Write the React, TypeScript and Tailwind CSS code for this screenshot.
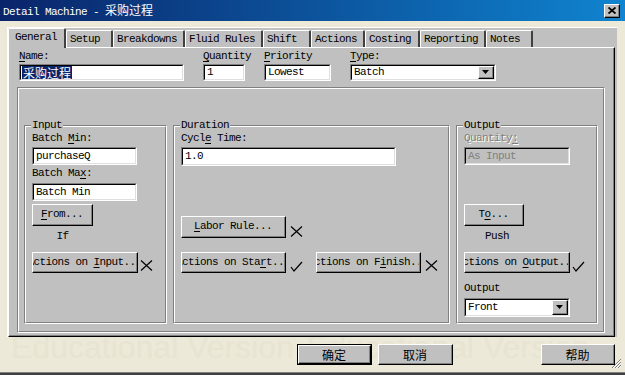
import React from 'react';

type Kids = { children?: React.ReactNode; className?: string };

const FONT = "font-['Liberation_Mono','Noto_Sans_CJK_SC',monospace] text-[11px] leading-[13px] tracking-[-0.6px] text-black";
const CJK = "font-['Noto_Sans_CJK_SC',sans-serif] tracking-normal";

function U({ children }: Kids) {
  return <span className="underline decoration-1 underline-offset-[2px]">{children}</span>;
}

// classic raised 3d button
function Raised({ children, className = '' }: Kids) {
  return (
    <div className={`flex shrink-0 border border-t-white border-l-white border-r-black border-b-black bg-[#c0c0c0] ${className}`}>
      <div className="flex min-w-0 flex-1 items-center justify-center overflow-hidden whitespace-nowrap border-r border-b border-r-[#808080] border-b-[#808080]">
        <span className="shrink-0">{children}</span>
      </div>
    </div>
  );
}

// sunken edit / combo box
function Sunken({ children, className = '', inner = 'bg-white pl-[2px]' }: Kids & { inner?: string }) {
  return (
    <div className={`flex shrink-0 border border-t-[#808080] border-l-[#808080] border-r-white border-b-white ${className}`}>
      <div className={`flex min-w-0 flex-1 items-center overflow-hidden whitespace-nowrap border border-t-black border-l-black border-r-[#dfdfdf] border-b-[#dfdfdf] ${inner}`}>
        {children}
      </div>
    </div>
  );
}

function DropBtn() {
  return (
    <Raised className="h-full w-[16px]">
      <svg width="7" height="4" viewBox="0 0 7 4" aria-hidden>
        <path d="M0 0h7L3.5 4z" fill="black" />
      </svg>
    </Raised>
  );
}

function Group({ label, children, className = '' }: Kids & { label?: string }) {
  return (
    <div className={`relative shrink-0 border border-t-[#808080] border-l-[#808080] border-r-white border-b-white ${className}`}>
      <div className="flex h-full flex-col border border-t-white border-l-white border-r-[#808080] border-b-[#808080] pl-[6px]">
        {children}
      </div>
      {label && <span className="absolute left-[6px] top-[-7px] bg-[#c0c0c0] px-[1px]">{label}</span>}
    </div>
  );
}

const XMark = ({ className = '' }: { className?: string }) => (
  <svg className={`shrink-0 ${className}`} width="13" height="11" viewBox="0 0 13 11" aria-hidden>
    <path d="M1 0.5L12 10.5M12 0.5L1 10.5" stroke="black" strokeWidth="1.2" fill="none" />
  </svg>
);

const Check = ({ className = '' }: { className?: string }) => (
  <svg className={`shrink-0 ${className}`} width="13" height="11" viewBox="0 0 13 11" aria-hidden>
    <path d="M1 6L4 10L12 1" stroke="black" strokeWidth="1.2" fill="none" />
  </svg>
);

const TABS = [
  { label: 'Setup', w: 'w-[47px]' },
  { label: 'Breakdowns', w: 'w-[72px]' },
  { label: 'Fluid Rules', w: 'w-[78px]' },
  { label: 'Shift', w: 'w-[48px]' },
  { label: 'Actions', w: 'w-[54px]' },
  { label: 'Costing', w: 'w-[55px]' },
  { label: 'Reporting', w: 'w-[66px]' },
  { label: 'Notes', w: 'w-[47px]' },
];

export default function App() {
  return (
    <div className={`relative flex h-[375px] w-[625px] flex-col overflow-hidden bg-[#ece9d8] ${FONT}`}>
      {/* title bar */}
      <div className="flex h-[21px] shrink-0 items-center bg-linear-to-r from-[#0a246a] to-[#1084d0] pl-[3px] pr-[5px] text-white">
        <span className="flex-1 whitespace-nowrap">
          Detail Machine - <span className={`${CJK} text-[12px]`}>采购过程</span>
        </span>
        <Raised className="h-[14px] w-[16px] text-black">
          <svg width="8" height="7" viewBox="0 0 8 7" aria-hidden>
            <path d="M0.5 0.5L7.5 6.5M7.5 0.5L0.5 6.5" stroke="black" strokeWidth="1.8" fill="none" />
          </svg>
        </Raised>
      </div>

      {/* tab control */}
      <div className="mt-[6px] pl-[7px]">
        <div className="flex h-[310px] w-[610px] flex-col border-t border-l border-t-white border-l-white bg-[#c0c0c0]">
          <div className="flex h-[19px] shrink-0 items-end">
            <div className="relative z-10 mb-[-1px] h-[20px] w-[58px] shrink-0 rounded-tl-[2px] rounded-tr-[2px] border-t border-l border-r-2 border-t-white border-l-white border-r-[#404040] bg-[#c0c0c0] pl-[6px] pt-[2px]">
              General
            </div>
            {TABS.map((t) => (
              <div
                key={t.label}
                className={`h-[17px] shrink-0 whitespace-nowrap rounded-tl-[2px] rounded-tr-[2px] border-t border-l border-r-2 border-t-white border-l-white border-r-[#404040] pl-[3px] pt-[2px] ${t.w}`}
              >
                {t.label}
              </div>
            ))}
          </div>

          {/* panel */}
          <div className="flex h-[290px] w-[607px] shrink-0 flex-col border border-t-white border-l-white border-r-black border-b-black">
            <div className="flex flex-1 flex-col border-r border-b border-r-[#808080] border-b-[#808080]">
              {/* top row */}
              <div className="flex pl-[10px] pt-[2px]">
                <div className="flex w-[165px] flex-col">
                  <div><U>N</U>ame:</div>
                  <Sunken className="mt-[1px] h-[17px] w-[165px]" inner="bg-white pl-[1px]">
                    <span className={`${CJK} bg-[#0a246a] px-[1px] text-[12px] leading-[13px] text-white`}>采购过程</span>
                  </Sunken>
                </div>
                <div className="ml-[19px] flex w-[42px] flex-col">
                  <div><U>Q</U>uantity</div>
                  <Sunken className="mt-[1px] h-[17px] w-[42px]">1</Sunken>
                </div>
                <div className="ml-[19px] flex w-[67px] flex-col">
                  <div><U>P</U>riority</div>
                  <Sunken className="mt-[1px] h-[17px] w-[67px]">Lowest</Sunken>
                </div>
                <div className="ml-[19px] flex w-[146px] flex-col">
                  <div><U>T</U>ype:</div>
                  <Sunken className="mt-[1px] h-[17px] w-[146px]" inner="bg-white">
                    <span className="flex-1 pl-[2px]">Batch</span>
                    <DropBtn />
                  </Sunken>
                </div>
              </div>

              {/* etched frame */}
              <Group className="ml-[8px] mt-[6px] h-[246px] w-[588px]">
                <div className="mt-[36px] flex gap-[6px]">
                  {/* Input */}
                  <Group label="Input" className="ml-[-1px] h-[199px] w-[143px]">
                    <div className="mt-[5px]">Batch <U>M</U>in:</div>
                    <Sunken className="mt-[2px] h-[18px] w-[105px]">purchaseQ</Sunken>
                    <div className="mt-[2px]">Batch Ma<U>x</U>:</div>
                    <Sunken className="mt-[3px] h-[18px] w-[105px]">Batch Min</Sunken>
                    <Raised className="mt-[3px] h-[22px] w-[61px]"><U>F</U>rom...</Raised>
                    <div className="mt-[4px] w-[61px] text-center">If</div>
                    <div className="mt-[9px] flex items-end">
                      <Raised className="h-[21px] w-[106px]">Actions on <U>I</U>nput...</Raised>
                      <XMark className="mb-[2px] ml-[2px]" />
                    </div>
                  </Group>

                  {/* Duration */}
                  <Group label="Duration" className="h-[199px] w-[277px]">
                    <div className="mt-[5px]">Cycl<U>e</U> Time:</div>
                    <Sunken className="mt-[2px] h-[19px] w-[215px]">1.0</Sunken>
                    <div className="mt-[50px] flex items-end">
                      <Raised className="h-[22px] w-[105px]"><U>L</U>abor Rule...</Raised>
                      <XMark className="mb-[1px] ml-[4px]" />
                    </div>
                    <div className="mt-[14px] flex items-end">
                      <Raised className="h-[21px] w-[105px]">Actions on Sta<U>r</U>t...</Raised>
                      <Check className="mb-[1px] ml-[4px]" />
                      <Raised className="ml-[13px] h-[21px] w-[105px]">Actions on F<U>i</U>nish...</Raised>
                      <XMark className="mb-[2px] ml-[4px]" />
                    </div>
                  </Group>

                  {/* Output */}
                  <Group label="Output" className="h-[199px] w-[142px]">
                    <div className="mt-[5px] text-[#808080] [text-shadow:1px_1px_0_#fff]">Quantity<U>:</U></div>
                    <Sunken className="mt-[2px] h-[18px] w-[106px]" inner="bg-[#c0c0c0] pl-[2px] text-[#808080]">As Input</Sunken>
                    <Raised className="mt-[39px] h-[22px] w-[60px]">T<U>o</U>...</Raised>
                    <div className="mt-[4px] w-[66px] text-center">Push</div>
                    <div className="mt-[9px] flex items-end">
                      <Raised className="h-[21px] w-[106px]">Actions on <U>O</U>utput...</Raised>
                      <Check className="mb-[1px] ml-[2px]" />
                    </div>
                    <div className="mt-[9px]">Output</div>
                    <Sunken className="mt-[3px] h-[19px] w-[106px]" inner="bg-white">
                      <span className="flex-1 pl-[2px]">Front</span>
                      <DropBtn />
                    </Sunken>
                  </Group>
                </div>
              </Group>
            </div>
          </div>
        </div>
      </div>

      {/* bottom bar */}
      <div className="relative flex-1 overflow-hidden">
        <div className="absolute left-[11px] top-[-5px] flex gap-[13px] whitespace-nowrap font-['Liberation_Sans',Arial,sans-serif] text-[32px] leading-[31px] tracking-normal text-[#e7e4d2]">
          <span>Educational Version</span>
          <span>Educational Version</span>
        </div>
        <div className={`relative flex pl-[297px] pt-[7px] ${CJK} text-[12px]`}>
          <div className="h-[21px] w-[75px] border border-black">
            <Raised className="h-full w-full">确定</Raised>
          </div>
          <Raised className="ml-[6px] h-[21px] w-[75px]">取消</Raised>
          <Raised className="ml-[88px] h-[21px] w-[74px]">帮助</Raised>
        </div>
        <svg className="absolute bottom-[3px] right-[3px]" width="11" height="11" viewBox="0 0 11 11" aria-hidden>
          <path d="M10 1L1 10M10 4L4 10M10 7L7 10" stroke="#808080" strokeWidth="1" />
          <path d="M10 2L2 10M10 5L5 10M10 8L8 10" stroke="#fff" strokeWidth="1" />
        </svg>
      </div>
      <div className="h-[3px] shrink-0 border-t border-t-[#808080] bg-[#404040]" />
    </div>
  );
}
